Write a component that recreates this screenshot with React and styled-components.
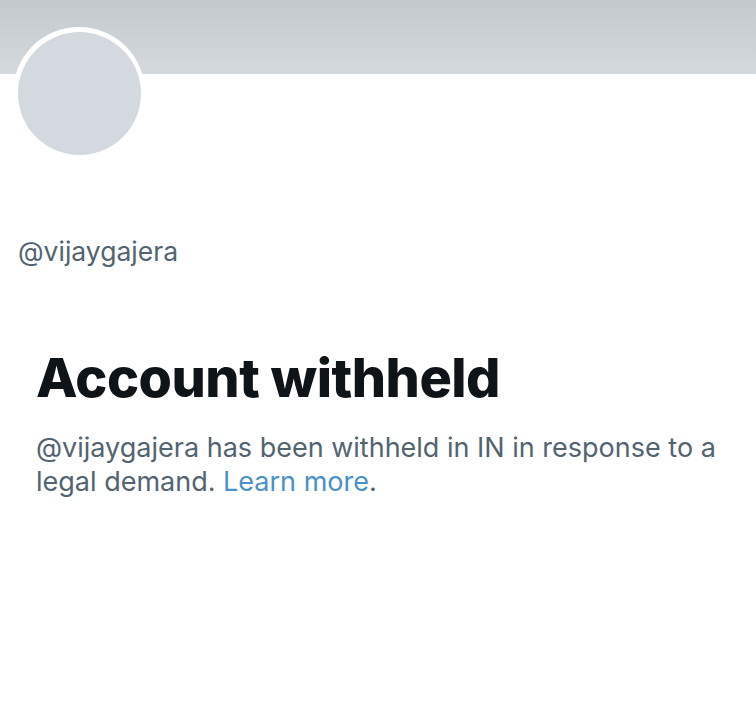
import styled, { createGlobalStyle } from 'styled-components';

const GlobalStyle = createGlobalStyle`
  body {
    margin: 0;
    background: #ffffff;
    font-family: Inter, "Noto Sans", sans-serif;
  }
`;

function App() {
  return (
    <StPage>
      <GlobalStyle />
      <StBanner />
      <StAvatarRing>
        <StAvatar />
      </StAvatarRing>
      <StHandle>@vijaygajera</StHandle>
      <StNotice>
        <StTitle>Account withheld</StTitle>
        <StText>
          @vijaygajera has been withheld in IN in response to a legal demand.{' '}
          <StLink href="#">Learn more</StLink>.
        </StText>
      </StNotice>
    </StPage>
  );
}

export default App;

const StPage = styled.div`
  width: 756px;
  height: 716px;
  background: #ffffff;
  overflow: hidden;
`;

const StBanner = styled.div`
  height: 74px;
  background: linear-gradient(180deg, #c3c9cd 0%, #d3d9dd 100%);
`;

const StAvatarRing = styled.div`
  width: 132px;
  height: 132px;
  margin: -47px 0 0 13px;
  border-radius: 50%;
  background: #ffffff;
  display: flex;
  align-items: center;
  justify-content: center;
`;

const StAvatar = styled.div`
  width: 123px;
  height: 123px;
  border-radius: 50%;
  background: #d3d9de;
`;

const StHandle = styled.div`
  margin: 76px 0 0 18px;
  font-size: 26.5px;
  line-height: 32px;
  color: #536471;
`;

const StNotice = styled.div`
  padding: 80px 24px 0 36px;
`;

const StTitle = styled.h1`
  margin: 0;
  font-size: 54px;
  font-weight: 800;
  line-height: 62px;
  letter-spacing: -0.5px;
  color: #0f1419;
`;

const StText = styled.p`
  margin: 22px 0 0 0;
  font-size: 27px;
  line-height: 34px;
  color: #536471;
`;

const StLink = styled.a`
  color: #4a90c9;
  text-decoration: none;
`;
